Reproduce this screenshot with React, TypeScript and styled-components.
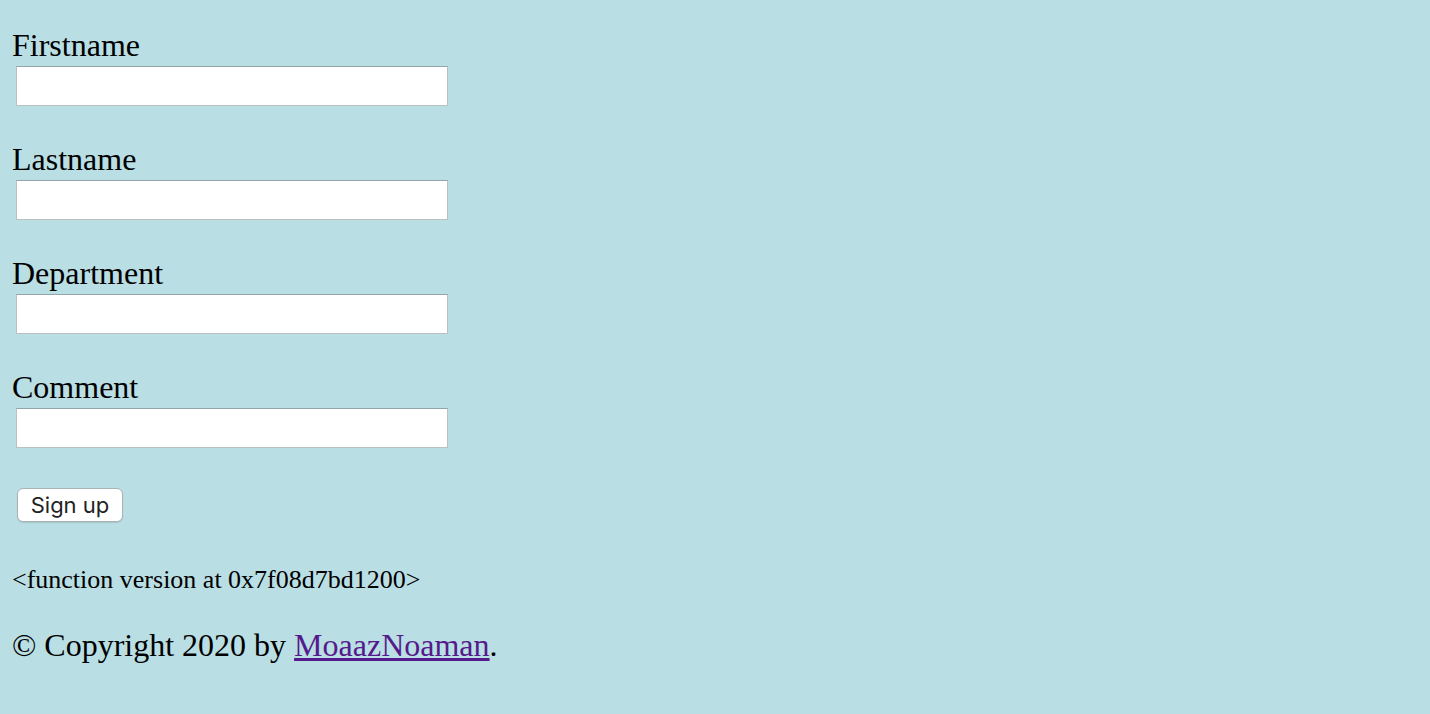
import React from "react";
import styled, { createGlobalStyle } from "styled-components";

const Global = createGlobalStyle`
  html, body {
    margin: 0;
    padding: 0;
    background: #b9dee4;
  }
  body {
    font-family: "Liberation Serif", "Times New Roman", serif;
    color: #000;
  }
`;

const Page = styled.div`
  padding: 27px 12px 0 12px;
  min-height: 714px;
  box-sizing: border-box;
`;

const Form = styled.form`
  display: flex;
  flex-direction: column;
  align-items: flex-start;
`;

const Field = styled.div`
  display: flex;
  flex-direction: column;
  align-items: flex-start;
  margin-bottom: 35px;
`;

const Label = styled.label`
  display: block;
  font-size: 32px;
  line-height: 36px;
  height: 36px;
`;

const Input = styled.input`
  box-sizing: border-box;
  width: 432px;
  height: 40px;
  margin: 3px 0 0 4px;
  padding: 0 6px;
  background: #fff;
  border: 1px solid #b8c0c2;
  border-top-color: #91a5aa;
  font-size: 18px;
  outline: none;
`;

const Button = styled.button`
  box-sizing: border-box;
  margin: 5px 0 0 5px;
  width: 106px;
  height: 34px;
  background: #fff;
  border: 1px solid #a9b2b5;
  border-radius: 6px;
  box-shadow: 0 1px 1px rgba(0, 0, 0, 0.12);
  font-family: Inter, "Liberation Sans", Arial, sans-serif;
  font-size: 22px;
  line-height: 32px;
  color: #222;
  padding: 0;
`;

const Version = styled.p`
  margin: 43px 0 0 0;
  font-size: 26px;
  line-height: 30px;
`;

const Footer = styled.p`
  margin: 32px 0 0 0;
  font-size: 32px;
  line-height: 36px;
`;

const Link = styled.a`
  color: #551a8b;
  text-decoration: underline;
`;

const fields = ["Firstname", "Lastname", "Department", "Comment"];

export default function App() {
  return (
    <>
      <Global />
      <Page>
        <Form onSubmit={(e) => e.preventDefault()}>
          {fields.map((f) => (
            <Field key={f}>
              <Label htmlFor={f}>{f}</Label>
              <Input id={f} type="text" />
            </Field>
          ))}
          <Button type="submit">Sign up</Button>
        </Form>
        <Version>{"<function version at 0x7f08d7bd1200>"}</Version>
        <Footer>
          © Copyright 2020 by <Link href="#">MoaazNoaman</Link>.
        </Footer>
      </Page>
    </>
  );
}
